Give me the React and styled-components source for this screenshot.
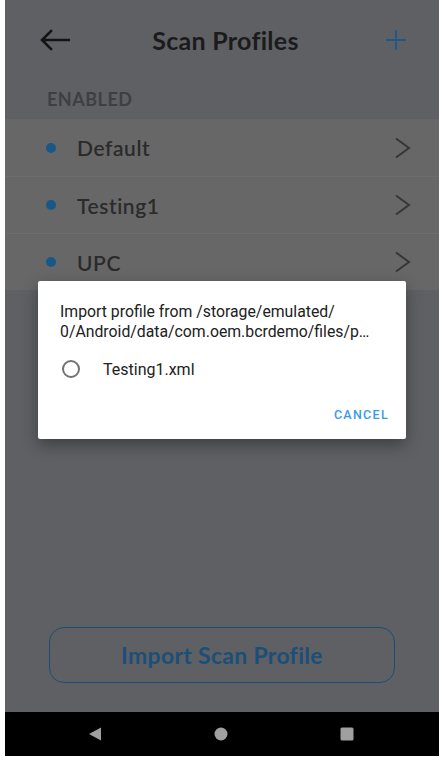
import React from "react";
import styled, { createGlobalStyle } from "styled-components";

const GlobalStyle = createGlobalStyle`
  html, body {
    margin: 0;
    padding: 0;
    background: #ffffff;
  }
  * {
    box-sizing: border-box;
  }
`;

const Screen = styled.div`
  position: relative;
  margin-left: 5px;
  width: 434px;
  height: 756px;
  display: flex;
  flex-direction: column;
  background: #5f6064;
  font-family: Lato, "Open Sans", sans-serif;
  overflow: hidden;
`;

const Content = styled.div`
  flex: 1;
  display: flex;
  flex-direction: column;
`;

const Header = styled.header`
  height: 80px;
  display: flex;
  align-items: center;
  justify-content: space-between;
  padding: 0 25px 0 32px;
`;

const Title = styled.h1`
  margin: 0;
  font-size: 25px;
  font-weight: 700;
  color: #1b1b1c;
  letter-spacing: 0.3px;
`;

const IconButton = styled.button`
  width: 36px;
  height: 36px;
  padding: 0;
  border: none;
  background: none;
  display: flex;
  align-items: center;
  justify-content: center;
`;

const SectionLabel = styled.div`
  height: 39px;
  display: flex;
  align-items: center;
  padding-left: 42px;
  padding-bottom: 2px;
  font-size: 18px;
  font-weight: 700;
  color: #3e3f41;
  letter-spacing: 0.5px;
`;

const List = styled.ul`
  margin: 0;
  padding: 0;
  list-style: none;
`;

const Row = styled.li`
  height: 57px;
  display: flex;
  align-items: center;
  padding: 0 28px 0 41px;
  background: #676767;
  border-top: ${(p) => (p.first ? "none" : "1px solid #6e6e6e")};
`;

const Dot = styled.span`
  width: 10px;
  height: 10px;
  border-radius: 50%;
  background: #175886;
  margin-right: 21px;
`;

const RowName = styled.span`
  flex: 1;
  font-size: 21px;
  font-weight: 500;
  color: #2a2a2a;
  letter-spacing: 0.6px;
  -webkit-text-stroke: 0.15px #2a2a2a;
`;

const Footer = styled.div`
  margin-top: auto;
  padding: 0 44px 29px;
`;

const OutlineButton = styled.button`
  width: 346px;
  height: 56px;
  border: 1.5px solid #1c4d72;
  border-radius: 15px;
  background: transparent;
  font-family: Lato, "Open Sans", sans-serif;
  font-size: 23px;
  font-weight: 700;
  color: #1c4f78;
  letter-spacing: 0.3px;
`;

const NavBar = styled.nav`
  height: 44px;
  background: #000000;
  display: flex;
  align-items: center;
  justify-content: space-between;
  padding: 0 80px 0 78px;
`;

const NavSlot = styled.div`
  width: 24px;
  height: 24px;
  display: flex;
  align-items: center;
  justify-content: center;
`;

const Scrim = styled.div`
  position: absolute;
  inset: 0 0 44px 0;
`;

const Dialog = styled.div`
  position: absolute;
  top: 281px;
  left: 33px;
  width: 368px;
  height: 158px;
  background: #ffffff;
  border-radius: 2px;
  box-shadow: 0 6px 16px rgba(0, 0, 0, 0.35);
  font-family: Roboto, "Noto Sans", sans-serif;
  display: flex;
  flex-direction: column;
  padding: 21px 0 0;
`;

const DialogTitle = styled.div`
  padding: 0 18px 0 22px;
  font-size: 15.8px;
  line-height: 20px;
  color: #212121;
  white-space: pre-line;
`;

const Option = styled.label`
  display: flex;
  align-items: center;
  height: 44px;
  margin-top: 5px;
  padding-left: 24px;
  font-size: 16px;
  color: #222222;
`;

const Radio = styled.span`
  width: 18px;
  height: 18px;
  border-radius: 50%;
  border: 2px solid #737373;
  margin-right: 23px;
`;

const Actions = styled.div`
  display: flex;
  justify-content: flex-end;
  padding: 8px 17px 0;
`;

const TextButton = styled.button`
  border: none;
  background: none;
  padding: 8px 0;
  font-family: Roboto, "Noto Sans", sans-serif;
  font-size: 12.5px;
  font-weight: 500;
  letter-spacing: 1.3px;
  color: #3a9ae9;
`;

const Chevron = () => (
  <svg width="18" height="22" viewBox="0 0 18 22">
    <path d="M3 1.5 L16 11 L3 20.5" fill="none" stroke="#363636" strokeWidth="2" />
  </svg>
);

const profiles = ["Default", "Testing1", "UPC"];

export default function App() {
  return (
    <>
      <GlobalStyle />
      <Screen>
        <Content>
          <Header>
            <IconButton aria-label="Back">
              <svg width="30" height="22" viewBox="0 0 30 22">
                <path
                  d="M29 11 H3 M11 2 L2 11 L11 20"
                  fill="none"
                  stroke="#141414"
                  strokeWidth="2.6"
                  strokeLinecap="square"
                />
              </svg>
            </IconButton>
            <Title>Scan Profiles</Title>
            <IconButton aria-label="Add">
              <svg width="22" height="22" viewBox="0 0 22 22">
                <path d="M11 1 V21 M1 11 H21" stroke="#1b5a88" strokeWidth="1.8" />
              </svg>
            </IconButton>
          </Header>
          <SectionLabel>ENABLED</SectionLabel>
          <List>
            {profiles.map((name, i) => (
              <Row key={name} first={i === 0}>
                <Dot />
                <RowName>{name}</RowName>
                <Chevron />
              </Row>
            ))}
          </List>
          <Footer>
            <OutlineButton>Import Scan Profile</OutlineButton>
          </Footer>
        </Content>
        <NavBar>
          <NavSlot>
            <svg width="14" height="14" viewBox="0 0 14 14">
              <path d="M13 0.5 V13.5 L1 7 Z" fill="#a0a0a0" />
            </svg>
          </NavSlot>
          <NavSlot>
            <svg width="14" height="14" viewBox="0 0 14 14">
              <circle cx="7" cy="7" r="6.5" fill="#a0a0a0" />
            </svg>
          </NavSlot>
          <NavSlot>
            <svg width="14" height="14" viewBox="0 0 14 14">
              <rect x="0.5" y="0.5" width="13" height="13" rx="1.5" fill="#a0a0a0" />
            </svg>
          </NavSlot>
        </NavBar>
        <Scrim>
          <Dialog>
            <DialogTitle>
              {"Import profile from /storage/emulated/\n0/Android/data/com.oem.bcrdemo/files/p…"}
            </DialogTitle>
            <Option>
              <Radio />
              Testing1.xml
            </Option>
            <Actions>
              <TextButton>CANCEL</TextButton>
            </Actions>
          </Dialog>
        </Scrim>
      </Screen>
    </>
  );
}
